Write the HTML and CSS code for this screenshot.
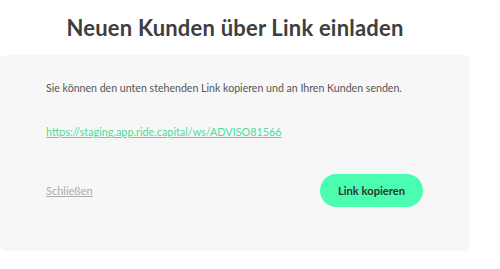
FILE: index.html
```html
<!DOCTYPE html>
<html lang="de">
<head>
<meta charset="utf-8">
<link rel="stylesheet" href="styles.css">
</head>
<body>
<div class="modal">
  <h1 class="title">Neuen Kunden über Link einladen</h1>
  <div class="panel">
    <p class="desc">Sie können den unten stehenden Link kopieren und an Ihren Kunden senden.</p>
    <a class="invite-link" href="#">https://staging.app.ride.capital/ws/ADVISO81566</a>
    <div class="actions">
      <a class="close" href="#">Schließen</a>
      <button class="copy-btn" type="button">Link kopieren</button>
    </div>
  </div>
</div>
</body>
</html>
```
FILE: styles.css
```css
html, body {
  margin: 0;
  padding: 0;
  background: #ffffff;
}
body {
  font-family: Lato, "Open Sans", sans-serif;
  color: #555555;
}
.modal {
  width: 470px;
  display: flex;
  flex-direction: column;
}
.title {
  margin: 0;
  padding-top: 14px;
  height: 55px;
  box-sizing: border-box;
  text-align: center;
  font-size: 22px;
  line-height: 28px;
  font-weight: 700;
  color: #3e3e3e;
  letter-spacing: 0.2px;
}
.panel {
  height: 196px;
  box-sizing: border-box;
  background: #f7f7f7;
  border-radius: 6px;
  padding: 26px 46px 0 46px;
  display: flex;
  flex-direction: column;
  align-items: flex-start;
}
.desc {
  margin: 0;
  font-size: 10.6px;
  line-height: 14px;
  color: #555555;
}
.invite-link {
  margin-top: 29px;
  font-size: 10.8px;
  line-height: 16px;
  color: #4ddb9c;
  text-decoration: underline;
}
.actions {
  margin-top: 34px;
  width: 377px;
  display: flex;
  align-items: center;
  justify-content: space-between;
}
.close {
  font-size: 11px;
  color: #adadad;
  text-decoration: underline;
}
.copy-btn {
  width: 103px;
  height: 33px;
  border: none;
  border-radius: 17px;
  background: #4bfdb0;
  color: #333333;
  font-family: Lato, "Open Sans", sans-serif;
  font-weight: 700;
  font-size: 11.2px;
  padding: 0;
}
```
